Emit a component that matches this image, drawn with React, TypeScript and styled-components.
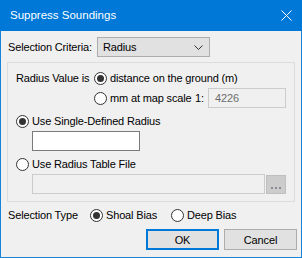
import React from "react";
import styled, { createGlobalStyle } from "styled-components";

// ====== Global ======
const GlobalStyle = createGlobalStyle`
  html, body {
    margin: 0;
    padding: 0;
    background: #ffffff;
  }
  * {
    box-sizing: border-box;
  }
`;

const FONT = `"Liberation Sans", Arial, sans-serif`;

// ====== Window ======
const Window = styled.div`
  width: 302px;
  height: 258px;
  display: flex;
  flex-direction: column;
  background: #f0f0f0;
  border: 1px solid #1883d7;
  border-top: none;
  font-family: ${FONT};
  font-size: 11px;
  letter-spacing: -0.15px;
  color: #000000;
`;

const TitleBar = styled.div`
  height: 31px;
  margin: 0 -1px;
  padding: 0 0 1px 10px;
  display: flex;
  align-items: center;
  justify-content: space-between;
  background: #0078d7;
  color: #ffffff;
  font-size: 11.5px;
  letter-spacing: 0;
`;

const CloseButton = styled.div`
  width: 32px;
  height: 31px;
  display: flex;
  align-items: center;
  justify-content: center;
`;

const Body = styled.div`
  flex: 1;
  padding: 6px 6px 0;
  display: flex;
  flex-direction: column;
`;

const Row = styled.div<{ mt?: number }>`
  height: 20px;
  margin-top: ${({ mt }) => mt ?? 0}px;
  display: flex;
  align-items: center;
`;

const Label = styled.span<{ w?: number; pl?: number }>`
  width: ${({ w }) => (w ? `${w}px` : "auto")};
  padding-left: ${({ pl }) => pl ?? 0}px;
  white-space: nowrap;
  flex-shrink: 0;
`;

// ====== Combo ======
const Combo = styled.div`
  width: 113px;
  height: 20px;
  padding: 0 6px 0 5px;
  display: flex;
  align-items: center;
  justify-content: space-between;
  background: #e1e1e1;
  border: 1px solid #adadad;
`;

// ====== Group box ======
const Group = styled.div`
  height: 140px;
  margin-top: 5px;
  padding: 5px 8px 0 8px;
  border: 1px solid #dcdcdc;
  display: flex;
  flex-direction: column;
`;

// ====== Radio ======
const RadioWrap = styled.label<{ w?: number }>`
  width: ${({ w }) => (w ? `${w}px` : "auto")};
  display: inline-flex;
  align-items: center;
  white-space: nowrap;
  flex-shrink: 0;
`;

const RadioCircle = styled.span<{ checked?: boolean }>`
  width: 13px;
  height: 13px;
  margin-right: 3px;
  border-radius: 50%;
  border: 1px solid #333333;
  background: #ffffff;
  display: inline-flex;
  align-items: center;
  justify-content: center;
  flex-shrink: 0;

  &::after {
    content: "";
    width: 7px;
    height: 7px;
    border-radius: 50%;
    background: ${({ checked }) => (checked ? "#333333" : "transparent")};
  }
`;

const Radio: React.FC<{ checked?: boolean; w?: number; children: React.ReactNode }> = ({
  checked,
  w,
  children,
}) => (
  <RadioWrap w={w}>
    <RadioCircle checked={checked} />
    {children}
  </RadioWrap>
);

// ====== Inputs ======
const TextBox = styled.div<{ w: number; disabled?: boolean }>`
  width: ${({ w }) => w}px;
  height: 20px;
  padding: 0 6px;
  display: flex;
  align-items: center;
  background: ${({ disabled }) => (disabled ? "#f0f0f0" : "#ffffff")};
  border: 1px solid ${({ disabled }) => (disabled ? "#cccccc" : "#7a7a7a")};
  color: #6d6d6d;
  flex-shrink: 0;
`;

const BrowseButton = styled.div`
  width: 20px;
  height: 19px;
  margin-left: 1px;
  padding-top: 11px;
  display: flex;
  justify-content: center;
  gap: 2px;
  background: #cccccc;
  border: 1px solid #bfbfbf;
`;

const Dot = styled.span`
  width: 2px;
  height: 2px;
  background: #8b8a99;
`;

const Indent = styled.div`
  padding-left: 16px;
  display: flex;
  align-items: center;
`;

// ====== Buttons ======
const ButtonRow = styled.div`
  margin: 4px -2px 0 0;
  display: flex;
  justify-content: flex-end;
  gap: 5px;
`;

const Button = styled.div<{ primary?: boolean }>`
  width: 73px;
  height: 21px;
  display: flex;
  align-items: center;
  justify-content: center;
  background: #e1e1e1;
  border: ${({ primary }) => (primary ? "2px solid #0078d7" : "1px solid #adadad")};
`;

const ChevronDown = () => (
  <svg width="9" height="5" viewBox="0 0 9 5">
    <path d="M0.5 0.5 L4.5 4.5 L8.5 0.5" fill="none" stroke="#333" strokeWidth="1" />
  </svg>
);

const CloseIcon = () => (
  <svg width="11" height="11" viewBox="0 0 11 11">
    <path d="M0.5 0.5 L10.5 10.5 M10.5 0.5 L0.5 10.5" stroke="#fff" strokeWidth="1" />
  </svg>
);

const App: React.FC = () => {
  return (
    <>
      <GlobalStyle />
      <Window>
        <TitleBar>
          <span>Suppress Soundings</span>
          <CloseButton>
            <CloseIcon />
          </CloseButton>
        </TitleBar>
        <Body>
          <Row>
            <Label w={90} pl={1}>
              Selection Criteria:
            </Label>
            <Combo>
              <span>Radius</span>
              <ChevronDown />
            </Combo>
          </Row>

          <Group>
            <Row>
              <Label w={78}>Radius Value is</Label>
              <Radio checked>distance on the ground (m)</Radio>
            </Row>
            <Row>
              <Label w={78} />
              <Radio w={101}>mm at map scale</Radio>
              <Label w={13}>1:</Label>
              <TextBox w={78} disabled>
                4226
              </TextBox>
            </Row>
            <Row mt={3}>
              <Radio checked>Use Single-Defined Radius</Radio>
            </Row>
            <Indent>
              <TextBox w={108} />
            </Indent>
            <Row mt={3}>
              <Radio>Use Radius Table File</Radio>
            </Row>
            <Indent>
              <TextBox w={233} disabled />
              <BrowseButton>
                <Dot />
                <Dot />
                <Dot />
              </BrowseButton>
            </Indent>
          </Group>

          <Row mt={3}>
            <Label w={83} pl={1}>
              Selection Type
            </Label>
            <Radio checked w={81}>
              Shoal Bias
            </Radio>
            <Radio>Deep Bias</Radio>
          </Row>

          <ButtonRow>
            <Button primary>OK</Button>
            <Button>Cancel</Button>
          </ButtonRow>
        </Body>
      </Window>
    </>
  );
};

export default App;
